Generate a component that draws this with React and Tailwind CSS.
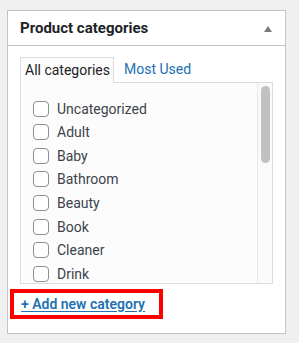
import React from "react";

const items = ["Uncategorized", "Adult", "Baby", "Bathroom", "Beauty", "Book", "Cleaner", "Drink"];

export default function App() {
  return (
    <div className="w-[299px] h-[343px] bg-[#f0f0f1] pt-[10px] pl-[7px]" style={{ fontFamily: "Roboto, 'Liberation Sans', sans-serif" }}>
      <div className="w-[279px] h-[324px] border border-[#c3c4c7] bg-white flex flex-col">
        <div className="h-[35px] border-b border-[#c3c4c7] flex items-center justify-between pl-[12px] pr-[13px] shrink-0">
          <h2 className="text-[15px] font-bold text-[#1d2327] leading-none whitespace-nowrap">Product categories</h2>
          <svg width="8" height="6" viewBox="0 0 8 6" className="mt-[1px]">
            <path d="M4 0 L8 6 L0 6 Z" fill="#787c82" />
          </svg>
        </div>
        <div className="px-[12px] pt-[11px]">
          <div className="flex">
            <div className="h-[26px] w-[94px] border border-b-0 border-[#dcdcde] bg-[#fcfcfc] flex items-center pl-[4px] text-[14px] text-[#1d2327] relative z-10 -mb-px whitespace-nowrap">
              All categories
            </div>
            <div className="h-[25px] flex items-center pl-[10px] text-[14px] text-[#2271b1] whitespace-nowrap">Most Used</div>
          </div>
          <div className="h-[202px] border border-[#dcdcde] bg-[#fcfcfc] flex overflow-hidden">
            <div className="flex-1 pt-[14px] pl-[12px]">
              {items.map((it) => (
                <div key={it} className="h-[23.57px] flex items-center gap-[8px]">
                  <span className="w-[16px] h-[16px] rounded-[4px] border border-[#8c8f94] bg-white shrink-0" />
                  <span className="text-[14px] text-[#3c434a] leading-none whitespace-nowrap">{it}</span>
                </div>
              ))}
            </div>
            <div className="w-[15px] border-l border-[#e8e8e8] bg-[#fafafa] pt-[3px] pl-[3px]">
              <div className="w-[9px] h-[77px] rounded-full bg-[#c1c1c1]" />
            </div>
          </div>
          <div className="mt-[5px] ml-[-10px] w-[153px] h-[30px] flex items-center pl-[7px] border-4 border-[#ff0000]">
            <a href="#" className="text-[14px] font-semibold text-[#2271b1] underline underline-offset-2 whitespace-nowrap">+ Add new category</a>
          </div>
        </div>
      </div>
    </div>
  );
}
